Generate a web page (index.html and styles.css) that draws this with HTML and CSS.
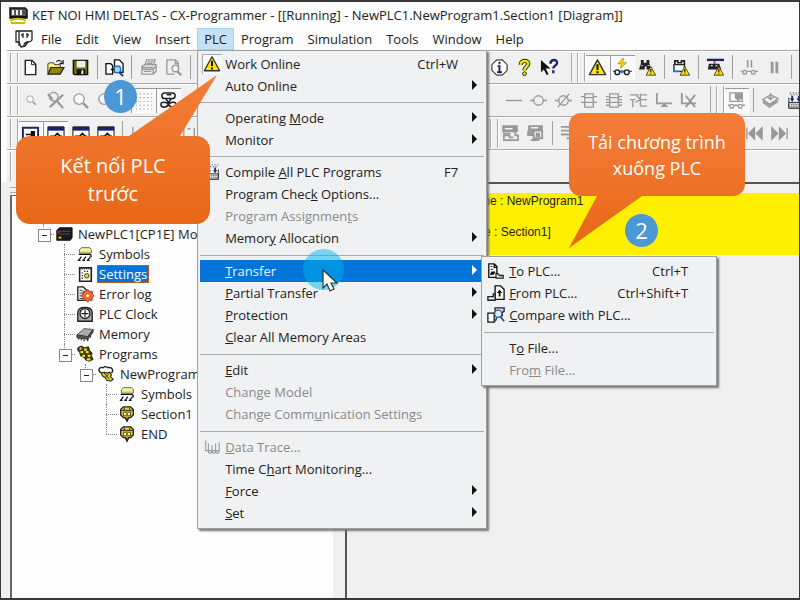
FILE: index.html
```html
<!DOCTYPE html>
<html lang="vi">
<head>
<meta charset="utf-8">
<title>CX-Programmer</title>
<link rel="stylesheet" href="styles.css">
</head>
<body>
<svg class="defs" aria-hidden="true">
  <defs>
    <linearGradient id="orange" x1="0" y1="0" x2="0" y2="1"><stop offset="0" stop-color="#f47d3a"/><stop offset="1" stop-color="#e86717"/></linearGradient>
    <symbol id="warn" viewBox="0 0 20 20"><path d="M10 2 18.500 17.500H1.500z" fill="#ffe600" stroke="#333" stroke-width="1.500" stroke-linejoin="round"/><path d="M10 6.500v6M10 14v2" stroke="#111" stroke-width="2.200"/></symbol>
    <symbol id="warn-s" viewBox="0 0 12 12"><path d="M6 1 11.500 11H.5z" fill="#ffe600" stroke="#333" stroke-width="1"/><path d="M6 4v4M6 9v1" stroke="#111" stroke-width="1.300"/></symbol>
    <symbol id="sym" viewBox="0 0 20 20"><path d="M4 9V5l2-2h9l2 2v4z" fill="#fff7a0" stroke="#555"/><path d="M5 7h10" stroke="#e8d838"/><path d="M3 10.500h12c2 0 2 1 2 3M6 13l-3 4m8-4-3 4m8-4-3 4" fill="none" stroke="#111" stroke-width="1.300"/><path d="M2 17h3m2 0h3m2 0h3" stroke="#111" stroke-width="1.500"/></symbol>
    <symbol id="sect" viewBox="0 0 20 20"><path d="M3 5l3-3h8l3 3v6l-3 3h-2l-2 4-2-4H6l-3-3z" fill="#e8d422" stroke="#222" stroke-width="1.500"/><path d="M3 6h14M7 3v3m6-3v3" stroke="#222"/><path d="M6 8h8v4H6z" fill="#fff9bd" stroke="#3b3500"/><path d="M10 9v2m0 3v2" stroke="#222" stroke-width="1.400"/></symbol>
    <symbol id="compile" viewBox="0 0 20 20"><path d="M3 7v11h14V7" fill="#fff" stroke="#222"/><path d="M3 12h14v6H3z" fill="#ddd" stroke="#222"/><path d="M5 14h11M5 16h11" stroke="#444" stroke-dasharray="1 1"/><path d="M4 8h5l-2.500 3.500zm7 0h5l-2.500 3.500zM5.500 5h2v3h-2zm7 0h2v3h-2z" fill="#1b2f7a"/><path d="M4 2h13M5 4h11" stroke="#345" stroke-width="1.200" stroke-dasharray="1 2"/></symbol>
    <symbol id="ladder" viewBox="0 0 20 20"><path d="M2 3h17v14H2z" fill="#fff" stroke="#111"/><path d="M2 3h17v4H2z" fill="#17246b"/><path d="M4 13h5l3-3 3 3h2M12 10v8M8 14h8" stroke="#111" stroke-width="1.800" fill="none"/><circle cx="12" cy="13" r="1.500" fill="#e8d422"/></symbol>
    <symbol id="glass" viewBox="0 0 20 20"><circle cx="8.500" cy="8.500" r="5.500" fill="#fafafa"/><path d="m13 13 5 5" stroke-width="2.500"/></symbol>
    <symbol id="block" viewBox="0 0 20 20"><path d="M6 3h9v14H6zM6 7h9M6 12h9M2 6h4m9 0h4M2 12h4m9 0h4"/></symbol>
  </defs>
</svg>

<main class="window">
  <header class="titlebar">
    <svg class="ic" viewBox="0 0 20 20"><path d="M2 3h15l2 2v8H2z" fill="#555" stroke="#111" stroke-width="1.500"/><path d="M4 5h2v5H4zm4 0h2v5H8zm4 0h2v5h-2z" fill="#eee"/><path d="M2 12h16" stroke="#111" stroke-width="2"/><path d="M2 16c4-3 12-3 16 0M3 18h14" stroke="#c9b800" stroke-width="2" fill="none"/></svg>
    <h1>KET NOI HMI DELTAS - CX-Programmer - [[Running] - NewPLC1.NewProgram1.Section1 [Diagram]]</h1>
  </header>

  <nav class="menubar" aria-label="Menu">
    <svg class="ic" viewBox="0 0 20 20"><path d="M2 2h16v9c-1 2-3 2-4 2l-3 4-4 1-2-5H2z" fill="#fff" stroke="#222" stroke-width="1.300" stroke-linejoin="round"/><path d="M5 2v15M7 6h2m4 0h2M9 4v5m4-5v5M10 17c0-3 1-4 4-4" stroke="#222" stroke-width="1.300"/></svg>
    <button>File</button><button>Edit</button><button>View</button><button>Insert</button>
    <div class="menu-anchor">
      <button class="open" aria-expanded="true">PLC</button>
      <div class="menu main-menu">
        <div class="group">
          <button class="item"><span class="mark checked"><svg><use href="#warn"/></svg></span>Work Online<kbd>Ctrl+W</kbd></button>
          <button class="item more">Auto Online</button>
        </div>
        <div class="group">
          <button class="item more"><span>Operating <u>M</u>ode</span></button>
          <button class="item more">Monitor</button>
        </div>
        <div class="group long">
          <button class="item"><span class="mark"><svg><use href="#compile"/></svg></span><span>Compile <u>A</u>ll PLC Programs</span><kbd>F7</kbd></button>
          <button class="item"><span>Program Chec<u>k</u> Options...</span></button>
          <button class="item" disabled><span>Program Assignmen<u>t</u>s</span></button>
          <button class="item more"><span>Memor<u>y</u> Allocation</span></button>
        </div>
        <div class="group long">
          <div class="sub-anchor">
            <button class="item more active" aria-expanded="true"><span><u>T</u>ransfer</span></button>
            <div class="menu sub-menu">
              <div class="group long">
                <button class="item"><span class="mark"><svg viewBox="0 0 20 20"><path d="M2 2h6l3 3v12H2zM8 2v4h3" fill="#fff" stroke="#111" stroke-width="1.500"/><path d="M4 5h2M4 8h3M4 14h3l2-3H5z" stroke="#111" fill="#111"/><path d="M10 17v-4h2l2 2h4v3h-8z" fill="#eee" stroke="#222" stroke-width="1.400"/></svg></span><span><u>T</u>o PLC...</span><kbd>Ctrl+T</kbd></button>
                <button class="item"><span class="mark"><svg viewBox="0 0 20 20"><path d="M9 2h6l4 4v11H9z" fill="#fff" stroke="#111" stroke-width="1.500"/><path d="m14 6-3 4h2v4h2v-4h2z" fill="#111"/><path d="M1 14h6v-3h2v7H1z" fill="#eee" stroke="#222" stroke-width="1.500"/></svg></span><span><u>F</u>rom PLC...</span><kbd>Ctrl+Shift+T</kbd></button>
                <button class="item"><span class="mark"><svg viewBox="0 0 20 20"><path d="M1 8h7v10H1z" fill="#fff" stroke="#111" stroke-width="1.400"/><path d="M9 2h10v4l-2 1v4H9z" fill="#ddd" stroke="#222" stroke-width="1.500"/><circle cx="12.500" cy="8.500" r="4" fill="#dceeff" stroke="#3564a0" stroke-width="1.500"/><path d="m15 12 4 5m-8-4-2 4" stroke="#244c8c" stroke-width="1.800"/></svg></span><span><u>C</u>ompare with PLC...</span></button>
              </div>
              <div class="group">
                <button class="item"><span>T<u>o</u> File...</span></button>
                <button class="item" disabled><span>Fro<u>m</u> File...</span></button>
              </div>
            </div>
          </div>
          <button class="item more"><span><u>P</u>artial Transfer</span></button>
          <button class="item more"><span><u>P</u>rotection</span></button>
          <button class="item"><span><u>C</u>lear All Memory Areas</span></button>
        </div>
        <div class="group long">
          <button class="item more"><span><u>E</u>dit</span></button>
          <button class="item" disabled>Change Model</button>
          <button class="item" disabled><span>Change Comm<u>u</u>nication Settings</span></button>
        </div>
        <div class="group long">
          <button class="item" disabled><span class="mark"><svg viewBox="0 0 20 20"><path d="M3 3v11h15M6 6v8c0 4 4 4 4 0V8m0 6c0 4 4 4 4 0V6m0 8c0 4 4 4 4 0V5" fill="none" stroke="#999" stroke-width="1.200"/></svg></span><span><u>D</u>ata Trace...</span></button>
          <button class="item"><span>Time C<u>h</u>art Monitoring...</span></button>
          <button class="item more"><span><u>F</u>orce</span></button>
          <button class="item more"><span><u>S</u>et</span></button>
        </div>
      </div>
    </div>
    <button>Program</button><button>Simulation</button><button>Tools</button><button>Window</button><button>Help</button>
  </nav>

  <div class="bars">
    <div class="bar-row">
      <div class="bar first">
        <i class="grip"></i>
        <button aria-label="New"><svg viewBox="0 0 20 20"><path d="M4.500 2.500h7l4 4v11h-11z" fill="#fff" stroke="#222" stroke-width="1.500"/><path d="M11 3v4h4" fill="none" stroke="#222"/></svg></button>
        <button aria-label="Open"><svg viewBox="0 0 20 20"><path d="M2 16V6l2-1h4l1 2h6v3" fill="#fff27a" stroke="#333"/><path d="M2 17 5 10h14l-4 7z" fill="#8c8515" stroke="#222" stroke-width="1.300"/><path d="M11 4c2-2 4-2 6 1m1-3v4h-4" fill="none" stroke="#222" stroke-width="1.300"/></svg></button>
        <button aria-label="Save"><svg viewBox="0 0 20 20"><path d="M2.500 2.500h15v15h-14l-1-1z" fill="#6e6b15" stroke="#111" stroke-width="1.500"/><path d="M6 3h9v7H6z" fill="#eee"/><path d="M6 12h9v6H6z" fill="#111"/><path d="M11 13h2v4h-2z" fill="#fff"/></svg></button>
        <i class="sep"></i>
        <button aria-label="Compare"><svg viewBox="0 0 20 20"><path d="M1 6h5l2 2v9H1zM10 2h5l4 4v9h-9z" fill="#fff" stroke="#111" stroke-width="1.400"/><circle cx="13" cy="12" r="3.500" fill="#9fd2f7" stroke="#2476b8" stroke-width="1.500"/><path d="m15 15 4 4" stroke="#123c7a" stroke-width="2"/><path d="M6 12h4" stroke="#111" stroke-width="1.500"/></svg></button>
        <i class="sep"></i>
        <button aria-label="Print" disabled><svg class="dim" viewBox="0 0 20 20"><path d="M6 8 8 2h9l-2 6M3 9l3-2h12v7l-3 3H3zM3 12h12v5m0-5 3-4M9 4h6M8 6h6M5 14h8M3 10h12"/></svg></button>
        <button aria-label="Preview" disabled><svg class="dim" viewBox="0 0 20 20"><path d="M3 17V2h9l3 3v4M12 2v4h3M3 17h8"/><circle cx="12" cy="11" r="3.500"/><path d="m14 14 4 4" stroke-width="2.500"/></svg></button>
        <i class="sep"></i>
      </div>
      <div class="bar">
        <button aria-label="About"><svg viewBox="0 0 20 20"><path d="M7 2h6l5 5v6l-5 5H7l-5-5V7z" fill="#fff" stroke="#444" stroke-width="1.300"/><path d="M10 4v2.500M8 8.500h2V15m-2.500 0h5" stroke="#16246b" stroke-width="2" fill="none"/></svg></button>
        <button aria-label="Help"><svg viewBox="0 0 20 20"><path d="M6 7c0-5 8-5 8-1 0 3-4 3-4 7" fill="none" stroke="#222" stroke-width="4.500"/><path d="M6 7c0-5 8-5 8-1 0 3-4 3-4 7" fill="none" stroke="#f2df00" stroke-width="2.500"/><circle cx="10" cy="16.500" r="2" fill="#f2df00" stroke="#222"/></svg></button>
        <button aria-label="Context help"><svg viewBox="0 0 20 20"><path d="M1 2v13l3-3 3 6 2-1-3-6h5z" fill="#111"/><path d="M11 6c0-5 7-5 7-1 0 3-4 3-4 6m0 2v3" fill="none" stroke="#17246b" stroke-width="2.500"/></svg></button>
        <i class="end"></i><i class="grip"></i>
        <button class="pressed" aria-label="Work online"><svg><use href="#warn"/></svg></button>
        <button class="pressed" aria-label="Monitoring"><svg viewBox="0 0 20 20"><path d="m11 0-6 6h4l-1 5 6-6h-4z" fill="#ffe600" stroke="#b59d00" stroke-width="1"/><path d="M0 14h2m5 0h5m5 0h3" stroke="#222"/><circle cx="4.500" cy="15" r="2.500" fill="#dff" stroke="#222" stroke-width="1.500"/><circle cx="14.500" cy="15" r="2.500" fill="#dff" stroke="#222" stroke-width="1.500"/><path d="M8 13h3v3H8z" fill="#2476b8"/></svg></button>
        <button aria-label="Find online"><svg viewBox="0 0 20 20"><path d="M3 2h3v3h3V2h3v4l2 6H9V9H7v3H1l2-6z" fill="#222"/><path d="M3 8h2m5 0h2" stroke="#ddd"/><use href="#warn-s" x="8" y="8" width="11" height="11"/></svg></button>
        <i class="sep"></i>
        <button aria-label="Transfer online"><svg viewBox="0 0 20 20"><path d="M3 7V3h3v2h4V3h3v6" fill="#fff" stroke="#222" stroke-width="1.800"/><path d="M2 7h11v7H2z" fill="#fff" stroke="#222" stroke-width="1.300"/><path d="M2 9v5h6" stroke="#2476b8" stroke-width="1.800" fill="none"/><use href="#warn-s" x="8" y="8" width="11" height="11"/></svg></button>
        <i class="sep"></i>
        <button aria-label="Compare online"><svg viewBox="0 0 20 20"><path d="M1 2h18" stroke="#17246b" stroke-width="2.500"/><path d="M9 3v3" stroke="#d33" stroke-width="2"/><path d="M3 6h11l2 6H2z" fill="#222"/><path d="M5 8h2m3 0h2" stroke="#ddd" stroke-width="1.500"/><use href="#warn-s" x="8" y="8" width="11" height="11"/></svg></button>
        <i class="sep"></i>
        <button aria-label="Pause monitor" disabled><svg class="dim" viewBox="0 0 20 20"><path d="M8 2v8m4-8v8" stroke-width="1.800"/><path d="M1 14h2m4 0h5m4 0h3"/><circle cx="5" cy="15" r="2"/><circle cx="14" cy="15" r="2"/></svg></button>
        <button aria-label="Pause" disabled><svg class="dim" viewBox="0 0 20 20"><path d="M7.500 4v12m5-12v12" stroke-width="3"/></svg></button>
        <i class="sep"></i>
      </div>
    </div>

    <div class="bar-row">
      <div class="bar first shifted">
        <i class="grip"></i>
        <button aria-label="Zoom small" disabled><svg class="dim small" viewBox="0 0 20 20"><use href="#glass"/></svg></button>
        <button aria-label="Zoom fit" disabled><svg class="dim" viewBox="0 0 20 20"><circle cx="8" cy="6" r="4.500"/><path d="m11 10 7 8M18 4 4 17M2 3l5 6" stroke-width="2.300"/></svg></button>
        <button aria-label="Zoom in" disabled><svg class="dim" viewBox="0 0 20 20"><use href="#glass"/></svg></button>
        <button aria-label="Zoom out" disabled><svg class="dim" viewBox="0 0 20 20"><use href="#glass"/></svg></button>
        <i class="sep wide"></i>
        <button class="pressed" aria-label="Grid"><svg viewBox="0 0 20 20"><path d="M2 3h17M2 7h17M2 11h17M2 15h17M2 19h17" stroke="#999" stroke-width="1.200" stroke-dasharray="1.200 2.800"/></svg></button>
        <button class="pressed" aria-label="Comments"><svg viewBox="0 0 20 20"><path d="M6 2h8c4 0 4 6 0 6H6C2 8 2 2 6 2z" fill="#fff" stroke="#222" stroke-width="1.600"/><path d="M8 4h5M7 8l3 4 3-4M10 12v4M2 14c0 4 6 4 8 0 2 4 8 4 8 0 0-3-6-3-8 0-2-3-8-3-8 0z" stroke="#222" stroke-width="1.600"/></svg></button>
      </div>
      <div class="bar">
        <button aria-label="Line" disabled><svg class="dim" viewBox="0 0 20 20"><path d="M2 10h17"/></svg></button>
        <button aria-label="Coil" disabled><svg class="dim" viewBox="0 0 20 20"><circle cx="10" cy="10" r="5"/><path d="M1 10h4m10 0h4"/></svg></button>
        <button aria-label="Closed coil" disabled><svg class="dim" viewBox="0 0 20 20"><circle cx="10" cy="10" r="5"/><path d="M1 10h4m10 0h4M4 17 16 3"/></svg></button>
        <button aria-label="Instruction" disabled><svg class="dim" viewBox="0 0 20 20"><use href="#block"/></svg></button>
        <button aria-label="Function block" disabled><svg class="dim" viewBox="0 0 20 20"><use href="#block"/><path d="M2 9h4m9 0h4M2 15h4m9 0h4"/></svg></button>
        <button aria-label="Parameter" disabled><svg class="dim" viewBox="0 0 20 20"><path d="M1 4h9M1 9h6m-3 0v8M8 5l4 4M12 3v13m0-12h7m-7 5h7m-7 7h7M7 12l5-3"/></svg></button>
        <button aria-label="Connect" disabled><svg class="dim" viewBox="0 0 20 20"><path d="M3 2v11h16M9 16l2-2 2 2z" stroke-width="1.800"/></svg></button>
        <button aria-label="Delete line" disabled><svg class="dim" viewBox="0 0 20 20"><path d="M3 2v11h15M17 4 7 17M7 5l10 12" stroke-width="2"/></svg></button>
        <i class="end"></i><i class="grip"></i>
        <button class="pressed" aria-label="Simulator"><svg class="dim" viewBox="0 0 20 20"><path d="M3 2h13v9H3zM1 15h2m4 0h5m4 0h3"/><path d="M9 3h7v5h-3l-1 2-3-3z" fill="#999"/><circle cx="5" cy="16" r="2"/><circle cx="14" cy="16" r="2"/></svg></button>
        <i class="sep"></i>
        <button aria-label="Layers" disabled><svg class="dim" viewBox="0 0 20 20"><path d="m2 9 8-5 8 4-9 6zM2 12l7 5 9-6M2 10l7 5 9-5M10 2v7m-3-3 3 3 3-3"/></svg></button>
        <button aria-label="Compile"><svg><use href="#compile"/></svg></button>
      </div>
    </div>

    <div class="bar-row">
      <div class="bar first">
        <i class="grip"></i>
        <button class="pressed" aria-label="Workspace"><svg viewBox="0 0 20 20"><path d="M2 4h16v12H2z" fill="#fff" stroke="#17246b" stroke-width="2"/><path d="M5 11h6m0-3v6h3V8z" stroke="#111" fill="#111" stroke-width="1.500"/></svg></button>
        <button class="pressed" aria-label="Diagram"><svg><use href="#ladder"/></svg></button>
        <button aria-label="Mnemonics"><svg><use href="#ladder"/></svg></button>
        <button aria-label="Symbols view"><svg><use href="#ladder"/></svg></button>
        <i class="sep"></i>
        <button aria-label="Contact" disabled><svg class="dim" viewBox="0 0 20 20"><path d="M3 3v14M7 10h4V4m4 0v13m0-7h4"/></svg></button>
        <button aria-label="Closed contact" disabled><svg class="dim" viewBox="0 0 20 20"><path d="M7 3v14m6-14v14"/></svg></button>
        <button aria-label="Bit" disabled><svg class="dim" viewBox="0 0 20 20"><path d="M4 4v12m11-12v12M8 5h3m-3 10h3"/></svg></button>
      </div>
      <div class="bar">
        <i class="grip"></i>
        <button aria-label="Upload" disabled><svg class="dim" viewBox="0 0 20 20"><path d="M2 2h15v6H2z" fill="#999"/><path d="M4 5h8" stroke="#fff"/><path d="M15 8v4h3v5H3v-5h6v2h4M2 10h8" stroke-width="1.800"/></svg></button>
        <button aria-label="Download" disabled><svg class="dim" viewBox="0 0 20 20"><path d="M3 2h14v5H3zM2 7v5h5V8" fill="#999"/><path d="M5 4h8" stroke="#fff"/><path d="M8 7h9v8H8zM5 17h9" fill="#eee" stroke-width="2"/><path d="M11 10h3v3h-3z" fill="#999"/></svg></button>
        <i class="sep"></i>
        <button aria-label="List" disabled><svg class="dim" viewBox="0 0 20 20"><path d="M1 3h16M1 7h16M1 11h16M7 15h10" stroke-width="2"/></svg></button>
        <i class="spring"></i>
        <button aria-label="First" disabled><svg class="dim" viewBox="0 0 20 20"><path d="M2 4v12"/><path d="m10 4-6 6 6 6zm8 0-6 6 6 6z" fill="#999"/></svg></button>
        <button aria-label="Last" disabled><svg class="dim" viewBox="0 0 20 20"><path d="M18 4v12"/><path d="m2 4 6 6-6 6zm8 0 6 6-6 6z" fill="#999"/></svg></button>
      </div>
    </div>
    <div class="bar-row"><div class="bar first"><i class="grip"></i></div></div>
  </div>

  <div class="work">
    <aside class="project">
      <div class="dock-grip"></div>
      <ul class="tree">
        <li>
          <div class="node"><i class="toggle"></i><svg viewBox="0 0 20 20"><path d="M2 6l3-3h14v11l-2 3H2z" fill="#1a1a1a" stroke="#111"/><path d="M3 7h14M3 10h14" stroke="#555"/><path d="M4 14h3" stroke="#f2df00" stroke-width="2"/><path d="M3 8h2" stroke="#d22" stroke-width="2"/></svg><span>NewPLC1[CP1E] Mo</span></div>
          <ul>
            <li><div class="node"><i></i><svg><use href="#sym"/></svg><span>Symbols</span></div></li>
            <li><div class="node"><i></i><svg viewBox="0 0 20 20"><path d="M4 3h13v15H4z" fill="#fff" stroke="#222" stroke-width="1.800"/><path d="M5 4h11" stroke="#222" stroke-width="2" stroke-dasharray="1 1"/><path d="M7 8v8M9 7h5" stroke="#222" stroke-width="1.300" stroke-dasharray="1.500 1.500"/><circle cx="12" cy="12" r="2.500" fill="#f2df00" stroke="#222"/></svg><span class="selected">Settings</span></div></li>
            <li><div class="node"><i></i><svg viewBox="0 0 20 20"><path d="M2 2h6l4 4v11H2z" fill="#eee" stroke="#222" stroke-width="1.500"/><path d="M4 6h3M4 9h5M4 12h4M4 15h4" stroke="#333"/><path d="m13 5 2 2 3 0 0 3 2 2-2 2v3h-3l-2 2-2-2H8v-3l-2-2 2-2V7h3z" fill="#ed6a32" stroke="#913414"/><path d="m11 12 2-2 2 2-2 2z" fill="#fff"/></svg><span>Error log</span></div></li>
            <li><div class="node"><i></i><svg viewBox="0 0 20 20"><path d="M2 18V8c1-7 15-7 16 0v10z" fill="#aaa" stroke="#222" stroke-width="1.500"/><circle cx="10" cy="9.500" r="5.500" fill="#fff" stroke="#222" stroke-width="1.400"/><path d="M10 5v9M6 9.500h8" stroke="#222" stroke-width="1.300"/></svg><span>PLC Clock</span></div></li>
            <li><div class="node"><i></i><svg viewBox="0 0 20 20"><path d="m1 11 8-7 10 1-6 8z" fill="#aaa" stroke="#555"/><path d="m1 11 12 2 6-8v3l-6 8-12-2z" fill="#555" stroke="#333"/><path d="M3 14v2m3-1v2m3-1v2m4-3v3m3-7v3" stroke="#333" stroke-width="1.500"/></svg><span>Memory</span></div></li>
            <li>
              <div class="node"><i class="toggle"></i><svg viewBox="0 0 20 20"><path d="m2 3 4-2 3 2 5-1 1 4 3 3-1 3 2 4-4 2-4-1-2-3-4-2-1-4-2-2z" fill="#3d3900" stroke="#222"/><path d="M4 4h2m3 1h3M5 8h3m3 0h3M7 12h3m3 0h3m-4 4h4" stroke="#f0df2d" stroke-width="2.500"/></svg><span>Programs</span></div>
              <ul>
                <li>
                  <div class="node"><i class="toggle"></i><svg viewBox="0 0 20 20"><path d="M5 9C0 6 2 2 7 3c2-2 4-1 5 0 5-1 7 3 4 6" fill="#fff" stroke="#222" stroke-width="1.500"/><path d="m5 9 3-1 3 1 3-1 2 3-1 2 3 3-3 2-4-1-2-3-3-2z" fill="#e8d422" stroke="#222" stroke-width="1.200"/><path d="m8 9 6 7m-1-6-4 4" stroke="#222"/></svg><span>NewProgram</span></div>
                  <ul>
                    <li><div class="node"><i></i><svg><use href="#sym"/></svg><span>Symbols</span></div></li>
                    <li><div class="node"><i></i><svg><use href="#sect"/></svg><span>Section1</span></div></li>
                    <li><div class="node"><i></i><svg><use href="#sect"/></svg><span>END</span></div></li>
                  </ul>
                </li>
              </ul>
            </li>
          </ul>
        </li>
      </ul>
    </aside>
    <section class="diagram">
      <div class="rung">
        <p>[Program Name : NewProgram1</p>
        <p>[Section Name : Section1]</p>
      </div>
    </section>
  </div>

  <div class="callout one">
    <svg viewBox="0 0 202 150"><path d="M14 61h99l88-61-37 61h16a14 14 0 0 1 14 14v60a14 14 0 0 1-14 14H14a14 14 0 0 1-14-14V75a14 14 0 0 1 14-14z" fill="url(#orange)"/></svg>
    <p>Kết nối PLC<br>trước</p>
  </div>
  <div class="callout two">
    <svg viewBox="0 0 176 136"><path d="M12 0h152a12 12 0 0 1 12 12v59a12 12 0 0 1-12 12H73L0 135l28-52H12A12 12 0 0 1 0 71V12A12 12 0 0 1 12 0z" fill="url(#orange)"/></svg>
    <p>Tải chương trình<br>xuống PLC</p>
  </div>
  <span class="step step-one">1</span>
  <span class="step step-two">2</span>
  <div class="pointer"><svg viewBox="0 0 16 24"><path d="M1 1v18l4-4 3 7 4-2-3-6h6z" fill="#fff" stroke="#333" stroke-width="1.200"/></svg></div>
</main>
</body>
</html>
```

FILE: styles.css
```css
* { box-sizing: border-box; }

body {
  margin: 0;
  font-family: "Open Sans", "Noto Sans", sans-serif;
  font-size: 13px;
  color: #222;
}

button {
  font: inherit;
  color: inherit;
  border: 0;
  background: none;
  padding: 0;
}

svg { fill: none; flex: none; }
.defs { position: absolute; width: 0; height: 0; }

.window {
  position: relative;
  display: flex;
  flex-direction: column;
  min-height: 100vh;
  overflow: hidden;
  border: 2px solid #3a3738;
  border-right-width: 1px;
  border-left-width: 1px;
  background: #fdfdfd;
}

.titlebar, .menubar { display: flex; align-items: center; }
.titlebar { height: 26px; padding-left: 7px; gap: 4px; }
.titlebar h1 { margin: 0; font-size: 13px; font-weight: 400; white-space: nowrap; }
.ic { width: 20px; height: 20px; }

.menubar { height: 22px; padding-left: 13px; }
.menubar > button, .menu-anchor > button { height: 22px; padding: 0 7px; }
.menu-anchor { position: relative; }
.menubar .open { background: #c5e2f5; box-shadow: inset 0 0 0 1px #a9d2ee; }

/* Drop-down menus */
.menu {
  position: absolute;
  z-index: 2;
  background: #f0f1f2;
  border: 1px solid #a0a0a0;
  box-shadow: 2px 2px 2px #777;
  padding: 2px;
}
.main-menu { top: 22px; left: 0; width: 290px; }
.sub-menu { top: -4px; left: 281px; width: 236px; padding-top: 3px; }
.group { padding-bottom: 5px; }
.group.long { padding-bottom: 6px; }
.group:last-child { padding-bottom: 2px; }
.group + .group { border-top: 1px solid #aaa; padding-top: 4px; }
.item {
  position: relative;
  display: flex;
  align-items: center;
  width: 100%;
  height: 22px;
  padding: 0 26px 0 25px;
  white-space: nowrap;
  text-align: left;
}
.item kbd { font: inherit; margin-left: auto; }
.item:disabled { color: #8b8b8b; }
.item.active { background: #0574d8; color: #e8f4ff; }
.item.more::after {
  content: "";
  position: absolute;
  right: 7px;
  top: 5px;
  border: 5px solid transparent;
  border-left-color: #111;
  border-right-width: 0;
}
.item.active::after { border-left-color: #fff; }
.sub-anchor { position: relative; }
.mark { position: absolute; left: 2px; top: 1px; width: 20px; height: 20px; }
.mark svg { width: 18px; height: 18px; margin: 1px; display: block; }
.checked { box-shadow: inset 1px 1px #aaa; background: #f8f8f8; }

/* Toolbars */
.bars { background: #f0f0f0; margin-left: 6px; }
.bar-row { display: flex; height: 33px; border-top: 1px solid #a8a8a8; box-shadow: inset 0 1px #fff; }
.bar { display: flex; align-items: center; flex: none; }
.bar.first { width: 480px; }
.bar.shifted { width: 494px; }
.bar button { flex: none; width: 25px; height: 25px; display: grid; place-items: center; }
.bar svg { width: 19px; height: 19px; }
.bar svg.small { width: 12px; height: 12px; }
.bar .pressed { background: #f9f9f9; box-shadow: inset 1px 1px #999, inset -1px -1px #fff; }
.dim { stroke: #999; stroke-width: 1.4px; }
.grip { flex: none; width: 11px; height: 29px; position: relative; }
.grip::before {
  content: "";
  position: absolute;
  left: 3px;
  top: 0;
  width: 6px;
  height: 29px;
  border: 1px solid #aaa;
  border-width: 0 1px;
  box-shadow: inset 1px 0 #fff, 1px 0 #fff;
}
.sep { flex: none; width: 9px; height: 24px; background: linear-gradient(#a0a0a0, #a0a0a0) center / 1px 100% no-repeat; }
.sep.wide { width: 13px; }
.end { flex: none; width: 12px; height: 29px; background: linear-gradient(#aaa, #aaa) 9px 0 / 1px 100% no-repeat; }
.spring { width: 160px; }

/* Work area */
.work { display: flex; flex: 1; background: #f0f0f0; }
.project {
  display: flex;
  flex-direction: column;
  flex: 0 0 332px;
  padding-left: 9px;
  overflow: hidden;
}
.dock-grip { height: 6px; margin: 5px 0 2px; border: 1px solid #aaa; border-width: 1px 0; }
.tree {
  flex: 1;
  margin: 0;
  padding: 28px 0 0 21px;
  background: #fdfdfd;
  border: 2px solid #666;
  border-width: 1px 0 0 2px;
}
.tree ul, .tree { list-style: none; }
.tree ul { margin: 0; padding: 0 0 0 21px; }
.tree li { position: relative; }
.node { display: flex; align-items: center; height: 20px; white-space: nowrap; }
.node > i { position: relative; flex: none; width: 21px; height: 20px; }
.node > i::before { content: ""; position: absolute; left: 10px; right: 0; top: 10px; border-top: 1px dotted #888; }
.tree li::before { content: ""; position: absolute; left: 10px; top: 0; bottom: 0; border-left: 1px dotted #888; }
.tree li:last-child::before { bottom: auto; height: 10px; }
.toggle::after {
  content: "";
  position: absolute;
  left: 5px;
  top: 5px;
  width: 11px;
  height: 11px;
  border: 1px solid #888;
  background: linear-gradient(#222, #222) center / 5px 1px no-repeat #fff;
}
.node svg { width: 18px; height: 18px; margin: 0 3px 0 1px; position: relative; }
.node span { padding: 0 2px; }
.node .selected { background: #0574d8; color: #fff; outline: 1px dotted #c96a2c; outline-offset: -1px; }

.diagram { flex: 1; margin-left: 12px; border: 1px solid #555; border-width: 2px 0 0 2px; padding-top: 9px; background: #f0f0f0; }
.rung {
  height: 62px;
  padding-left: 65px;
  background: #fff000;
  font: 12px/16px "Liberation Sans", Arial, sans-serif;
}
.rung p { margin: 0 0 15px; }

/* Annotations */
.callout { position: absolute; z-index: 3; color: #fff; text-align: center; font-size: 18px; line-height: 26px; }
.callout svg { position: absolute; inset: 0; width: 100%; height: 100%; }
.callout p { position: relative; margin: 0; }
.one { left: 15px; top: 73px; width: 202px; height: 150px; padding: 77px 8px 0 0; font-size: 20px; line-height: 28px; }
.two { left: 568px; top: 111px; width: 176px; height: 136px; padding-top: 16px; }
.step {
  position: absolute;
  z-index: 4;
  width: 33px;
  height: 33px;
  border-radius: 50%;
  background: #4c97d6;
  color: #fff;
  font-size: 22px;
  line-height: 33px;
  text-align: center;
}
.step-one { left: 103px; top: 78px; }
.step-two { left: 624px; top: 212px; }
.pointer { position: absolute; z-index: 4; left: 302px; top: 247px; width: 41px; height: 41px; border-radius: 50%; background: #00b4f080; }
.pointer svg { position: absolute; left: 19px; top: 20px; width: 16px; height: 24px; }
```
